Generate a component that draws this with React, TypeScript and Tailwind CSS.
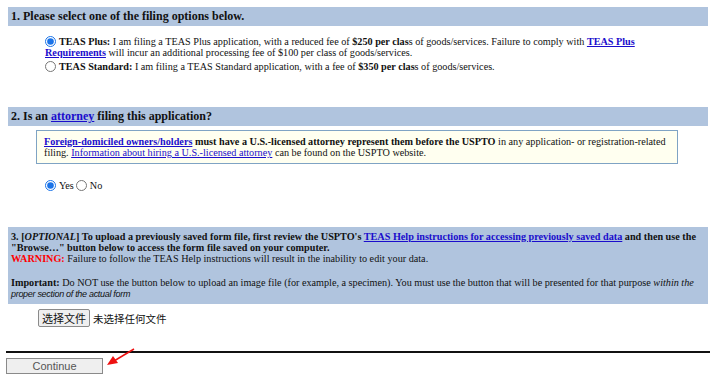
import { FC } from "react";

const Radio: FC<{ checked?: boolean }> = ({ checked }) => (
  <input
    type="radio"
    readOnly
    checked={!!checked}
    className="m-0 mr-[3px] h-[11px] w-[11px] align-[-2px] accent-[#1a73e8]"
  />
);

const A: FC<{ children: React.ReactNode; bold?: boolean }> = ({ children, bold }) => (
  <a href="#" className={`text-[#1a0dcc] underline ${bold ? "font-bold" : ""}`}>
    {children}
  </a>
);

export default function App() {
  return (
    <div className="w-[720px] h-[376px] overflow-hidden bg-white text-[#111] text-[10.2px] leading-[11px] font-['Liberation_Serif',serif]">
      <div className="pt-[7px] pl-2 pr-[12px]">
        <div className="bg-[#b0c4de] h-[19px] pl-[3px] flex items-center font-bold text-[12px]">
          1. Please select one of the filing options below.
        </div>

        <div className="pl-[37px] pr-[66px] pt-[10px]">
          <div>
            <Radio checked />
            <b>TEAS Plus:</b> I am filing a TEAS Plus application, with a reduced fee of{" "}
            <b>$250 per clas</b>s of goods/services. Failure to comply with{" "}
            <A bold>TEAS Plus Requirements</A> will incur an additional processing fee of $100 per
            class of goods/services.
          </div>
          <div className="mt-[3px]">
            <Radio />
            <b>TEAS Standard:</b> I am filing a TEAS Standard application, with a fee of{" "}
            <b>$350 per clas</b>s of goods/services.
          </div>
        </div>

        <div className="mt-[35px] bg-[#b0c4de] h-[19px] pl-[3px] flex items-center font-bold text-[12px]">
          2. Is an&nbsp;<A>attorney</A>&nbsp;filing this application?
        </div>

        <div className="ml-[28px] mr-[30px] mt-[4px] border border-[#7fa3c4] bg-[#fffff0] px-[7px] py-[5px]">
          <A bold>Foreign-domiciled owners/holders</A>{" "}
          <b>must have a U.S.-licensed attorney represent them before the USPTO</b> in any
          application- or registration-related filing.{" "}
          <A>Information about hiring a U.S.-licensed attorney</A> can be found on the USPTO website.
        </div>

        <div className="pl-[37px] mt-[16px]">
          <Radio checked />
          Yes
          <span className="ml-[2px]">
            <Radio />
          </span>
          No
        </div>

        <div className="mt-[36px] bg-[#b0c4de] px-[3px] pt-[4px] pb-[4px]">
          <div>
            <b>
              3. [<i>OPTIONAL</i>] To upload a previously saved form file, first review the USPTO's{" "}
              <A>TEAS Help instructions for accessing previously saved data</A> and then use the
              "Browse…" button below to access the form file saved on your computer.
            </b>
          </div>
          <div>
            <span className="text-[#ff0000] font-bold">WARNING:</span> Failure to follow the TEAS
            Help instructions will result in the inability to edit your data.
          </div>
          <div className="mt-[13px]">
            <b>Important:</b> Do NOT use the button below to upload an image file (for example, a
            specimen). You must use the button that will be presented for that purpose{" "}
            <i>within the</i>{" "}
            <i className="font-['Liberation_Sans',sans-serif] text-[9px] tracking-[-0.3px]">
              proper section of the actual form
            </i>
          </div>
        </div>

        <div className="pl-[30px] mt-[5px] flex items-center font-['Noto_Sans_CJK_SC',sans-serif] text-[11px]">
          <span className="border border-[#8a8a8a] bg-[#efefef] rounded-[2px] px-[3px] h-[18px] flex items-center">
            选择文件
          </span>
          <span className="ml-[3px] text-[10.5px]">未选择任何文件</span>
        </div>
      </div>

      <div className="relative mt-[24px] ml-[6px] mr-[10px] border-t-2 border-[#111]">
        <svg className="absolute left-[98px] top-[-5px]" width="34" height="20" viewBox="0 0 34 20">
          <line x1="30" y1="1" x2="10" y2="13" stroke="#e11" strokeWidth="1.5" />
          <polygon points="3,17 9,8 14,15" fill="#e11" />
        </svg>
      </div>
      <div className="ml-[6px] mt-[5px] w-[97px] h-[16px] border border-[#8a8a8a] bg-[#efefef] flex items-center justify-center text-[11px] text-[#555] font-['Liberation_Sans',sans-serif]">
        Continue
      </div>
    </div>
  );
}
